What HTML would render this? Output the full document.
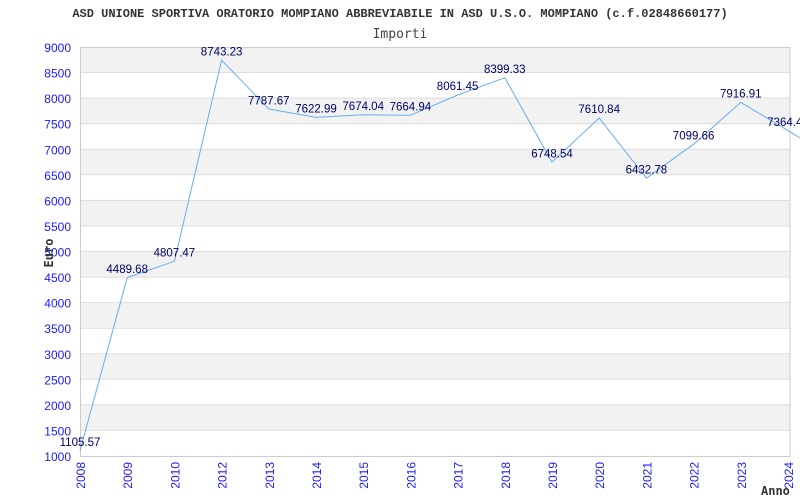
<!DOCTYPE html>
<html><head><meta charset="utf-8"><style>
html,body{margin:0;padding:0;background:#fff;width:800px;height:500px;overflow:hidden}
svg{display:block}
</style></head><body>
<svg width="800" height="500" xmlns="http://www.w3.org/2000/svg">
<text x="400" y="17" text-anchor="middle" font-family="Liberation Mono, monospace" font-weight="bold" font-size="12" fill="#333">ASD UNIONE SPORTIVA ORATORIO MOMPIANO ABBREVIABILE IN ASD U.S.O. MOMPIANO (c.f.02848660177)</text>
<text x="400" y="38" text-anchor="middle" font-family="DejaVu Sans Mono, monospace" font-size="13" fill="#444">Importi</text>
<g fill="#f2f2f2">
<rect x="80" y="47" width="710" height="25.56"/>
<rect x="80" y="98.1" width="710" height="25.56"/>
<rect x="80" y="149.25" width="710" height="25.56"/>
<rect x="80" y="200.4" width="710" height="25.56"/>
<rect x="80" y="251.5" width="710" height="25.56"/>
<rect x="80" y="302.6" width="710" height="25.56"/>
<rect x="80" y="353.75" width="710" height="25.56"/>
<rect x="80" y="404.9" width="710" height="25.56"/>
</g>
<g stroke="#ddd" stroke-width="1">
<line x1="80" x2="790" y1="72.5" y2="72.5"/><line x1="80" x2="790" y1="98.1" y2="98.1"/>
<line x1="80" x2="790" y1="123.7" y2="123.7"/><line x1="80" x2="790" y1="149.3" y2="149.3"/>
<line x1="80" x2="790" y1="174.8" y2="174.8"/><line x1="80" x2="790" y1="200.4" y2="200.4"/>
<line x1="80" x2="790" y1="226" y2="226"/><line x1="80" x2="790" y1="251.5" y2="251.5"/>
<line x1="80" x2="790" y1="277.1" y2="277.1"/><line x1="80" x2="790" y1="302.6" y2="302.6"/>
<line x1="80" x2="790" y1="328.2" y2="328.2"/><line x1="80" x2="790" y1="353.8" y2="353.8"/>
<line x1="80" x2="790" y1="379.3" y2="379.3"/><line x1="80" x2="790" y1="404.9" y2="404.9"/>
<line x1="80" x2="790" y1="430.4" y2="430.4"/>
</g>
<rect x="80.5" y="47.5" width="709.5" height="409" fill="none" stroke="#ccc"/>
<g font-family="Liberation Sans, sans-serif" font-size="12" fill="#1a1aff" text-anchor="end">
<text x="71" y="52">9000</text><text x="71" y="77.5">8500</text><text x="71" y="103">8000</text>
<text x="71" y="128.7">7500</text><text x="71" y="154.3">7000</text><text x="71" y="179.8">6500</text>
<text x="71" y="205.4">6000</text><text x="71" y="231">5500</text><text x="71" y="256.5">5000</text>
<text x="71" y="282.1">4500</text><text x="71" y="307.6">4000</text><text x="71" y="333.2">3500</text>
<text x="71" y="358.8">3000</text><text x="71" y="384.3">2500</text><text x="71" y="409.9">2000</text>
<text x="71" y="435.4">1500</text><text x="71" y="461">1000</text>
</g>
<g font-family="Liberation Sans, sans-serif" font-size="12" fill="#1a1aff" text-anchor="end">
<text transform="translate(85,462) rotate(-90)">2008</text>
<text transform="translate(132.2,462) rotate(-90)">2009</text>
<text transform="translate(179.4,462) rotate(-90)">2010</text>
<text transform="translate(226.6,462) rotate(-90)">2012</text>
<text transform="translate(273.8,462) rotate(-90)">2013</text>
<text transform="translate(321,462) rotate(-90)">2014</text>
<text transform="translate(368.2,462) rotate(-90)">2015</text>
<text transform="translate(415.4,462) rotate(-90)">2016</text>
<text transform="translate(462.6,462) rotate(-90)">2017</text>
<text transform="translate(509.8,462) rotate(-90)">2018</text>
<text transform="translate(557,462) rotate(-90)">2019</text>
<text transform="translate(604.2,462) rotate(-90)">2020</text>
<text transform="translate(651.4,462) rotate(-90)">2021</text>
<text transform="translate(698.6,462) rotate(-90)">2022</text>
<text transform="translate(745.8,462) rotate(-90)">2023</text>
<text transform="translate(793,462) rotate(-90)">2024</text>
</g>
<text transform="translate(53,253) rotate(-90)" text-anchor="middle" font-family="DejaVu Sans Mono, monospace" font-weight="bold" font-size="12" fill="#333">Euro</text>
<text x="761" y="495" font-family="DejaVu Sans Mono, monospace" font-weight="bold" font-size="12" fill="#333">Anno</text>
<polyline fill="none" stroke="#6aacf0" stroke-width="1" points="80,450.6 127.2,277.6 174.4,261.3 221.6,60.1 268.8,109 316,117.4 363.2,114.8 410.4,115.3 457.6,95 504.8,77.7 552,162.1 599.2,118 646.4,178.2 693.6,144.2 740.8,102.4 788,130.6 800,138"/>
<g font-family="Liberation Sans, sans-serif" font-size="11.5" fill="#000066" text-anchor="middle">
<text x="80" y="446">1105.57</text>
<text x="127.2" y="273">4489.68</text>
<text x="174.4" y="256.5">4807.47</text>
<text x="221.6" y="55.5">8743.23</text>
<text x="268.8" y="104.5">7787.67</text>
<text x="316" y="112.5">7622.99</text>
<text x="363.2" y="110">7674.04</text>
<text x="410.4" y="110.5">7664.94</text>
<text x="457.6" y="90">8061.45</text>
<text x="504.8" y="73">8399.33</text>
<text x="552" y="157.5">6748.54</text>
<text x="599.2" y="113">7610.84</text>
<text x="646.4" y="173.5">6432.78</text>
<text x="693.6" y="139.5">7099.66</text>
<text x="740.8" y="97.5">7916.91</text>
<text x="788" y="126">7364.40</text>
</g>
</svg>
</body></html>
